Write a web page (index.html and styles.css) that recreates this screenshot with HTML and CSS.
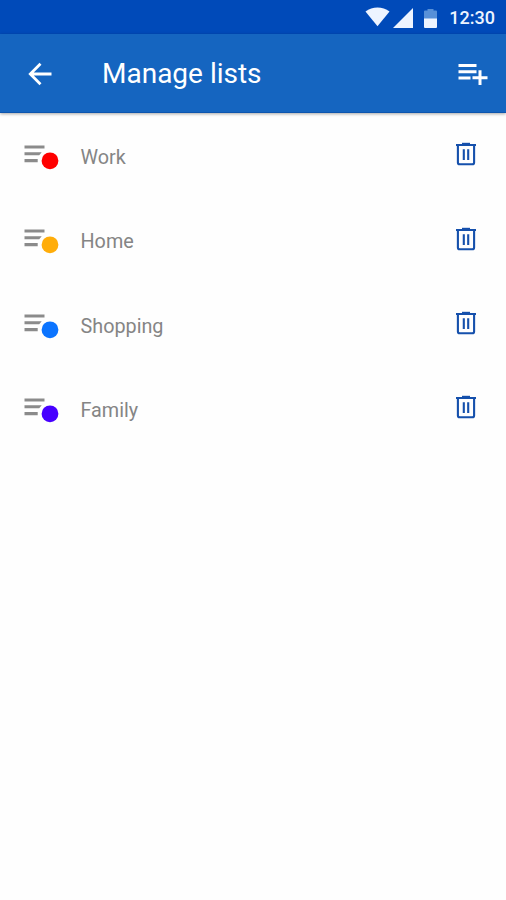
FILE: index.html
```html
<!DOCTYPE html>
<html lang="en">
<head>
<meta charset="utf-8">
<title>Manage lists</title>
<link rel="stylesheet" href="styles.css">
</head>
<body>
<svg width="0" height="0" class="defs" aria-hidden="true">
  <symbol id="list" viewBox="0 0 36 28"><path fill="#8b8b8b" d="M.5 2.500h20v3H.5zM.5 9.300h17.200l-2.500 3H.5zM.5 16.100h13.200v3.100H.5z"/><circle cx="26" cy="17.800" r="8.400" fill="currentColor"/></symbol>
  <symbol id="trash" viewBox="0 0 22 24"><path fill="none" stroke="currentColor" stroke-width="2.100" d="M1 3h20M2.900 3v17.400q0 1.800 1.800 1.800h12.600q1.800 0 1.800-1.800V3M8.800 7.300v10.600M13.200 7.300v10.600"/><path fill="currentColor" d="M7 .8h8V3H7z"/></symbol>
</svg>
<div class="status">
  <svg class="wifi" width="25" height="20" viewBox="0 0 26 20"><path d="M.5 4.200C7.800-1.400 18.200-1.400 25.500 4.200L13 19.500z"/></svg>
  <svg class="signal" width="20" height="20" viewBox="0 0 20 20"><path d="M20 0v20H0z"/></svg>
  <svg class="battery" width="13" height="19" viewBox="0 0 13 19"><path class="dim" d="M3.500 0h6v1.500H12q1 0 1 1V10H0V2.500q0-1 1-1h2.500z"/><path d="M0 9.500h13V18q0 1-1 1H1q-1 0-1-1z"/></svg>
  <span class="time">12:30</span>
</div>
<header class="bar">
  <svg class="back" width="24" height="24" viewBox="0 0 24 24"><path d="M23.500 12H2.500M12.500 1.800 2.300 12l10.200 10.200"/></svg>
  <h1 class="title">Manage lists</h1>
  <svg class="add" width="30" height="22" viewBox="0 0 30 22"><path d="M.5 1h18v3H.5zM.5 7.200h18v3H.5zM.5 13.400h12v3H.5zM20.500 7.200h3v6h6v3h-6v6h-3v-6h-6v-3h6z"/></svg>
</header>
<main class="lists">
  <div class="row"><svg class="icon red"><use href="#list"/></svg><span class="name">Work</span><svg class="trash"><use href="#trash"/></svg></div>
  <div class="row"><svg class="icon amber"><use href="#list"/></svg><span class="name">Home</span><svg class="trash"><use href="#trash"/></svg></div>
  <div class="row"><svg class="icon blue"><use href="#list"/></svg><span class="name">Shopping</span><svg class="trash"><use href="#trash"/></svg></div>
  <div class="row"><svg class="icon violet"><use href="#list"/></svg><span class="name">Family</span><svg class="trash"><use href="#trash"/></svg></div>
</main>
</body>
</html>
```
FILE: styles.css
```css
* { box-sizing: border-box; }
body { margin: 0; height: 900px; background: #fefefe; font-family: Roboto, sans-serif; overflow: hidden; }
.defs { display: none; }
svg { display: block; flex: none; }
.status { height: 34px; background: #004ab9; display: flex; align-items: center; justify-content: flex-end; padding: 0 11px 0 0; fill: #edf4ff; }
.wifi { margin: 0 3px 0 0; }
.signal { margin: 1px 11px 0 0; }
.battery { margin: 3px 12px 0 0; }
.dim { fill: #5790d8; }
.time { color: #edf4ff; font-size: 18px; font-weight: 500; line-height: 20px; margin-top: 2px; }
.bar { height: 79px; background: #1565c0; border-bottom: 1px solid #0d55ae; box-shadow: 0 1px 3px rgba(0, 0, 0, .35); display: flex; align-items: center; padding: 1px 18px 0 28px; }
.back { fill: none; stroke: #fff; stroke-width: 2.8; }
.title { flex: 1; margin: 1px 0 0 50px; color: #fff; font-size: 28px; font-weight: 400; line-height: 34px; }
.add { fill: #fff; margin-top: 1px; }
.lists { padding-top: 1.6px; }
.row { height: 84.4px; display: flex; align-items: center; padding: 0 29px 0 24px; }
.icon { width: 36px; height: 28px; }
.name { flex: 1; margin: 2px 0 0 20.5px; color: #858585; font-size: 19.8px; line-height: 24px; }
.trash { width: 22px; height: 24px; color: #1550ac; margin-bottom: 5px; }
.red { color: #f00; }
.amber { color: #ffad0a; }
.blue { color: #0b74ff; }
.violet { color: #4700ff; }
```
